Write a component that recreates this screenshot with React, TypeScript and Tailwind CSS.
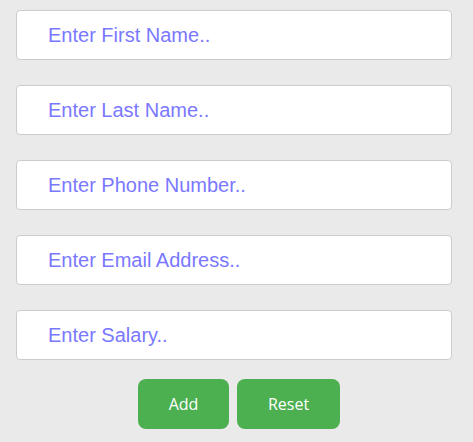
export default function App() {
  const fields = [
    "Enter First Name..",
    "Enter Last Name..",
    "Enter Phone Number..",
    "Enter Email Address..",
    "Enter Salary..",
  ];

  return (
    <div className="min-h-[442px] w-full bg-[#eaeaea] pt-[10px] font-['Liberation_Sans',Arial,sans-serif]">
      <form className="flex flex-col">
        <div className="flex flex-col gap-[25px] pl-4">
          {fields.map((f) => (
            <input
              key={f}
              type="text"
              placeholder={f}
              className="h-[50px] w-[436px] rounded-[4px] border border-[#cccccc] bg-white pl-[31px] text-[20px] text-[#333] outline-none placeholder:text-[#7a78ff]"
            />
          ))}
        </div>
        <div className="mt-[19px] flex gap-2 pl-[138px]">
          <button
            type="button"
            className="h-[50px] w-[91px] rounded-[8px] bg-[#4caf50] font-['Open_Sans',sans-serif] text-[16px] text-white"
          >
            Add
          </button>
          <button
            type="button"
            className="h-[50px] w-[103px] rounded-[8px] bg-[#4caf50] font-['Open_Sans',sans-serif] text-[16px] text-white"
          >
            Reset
          </button>
        </div>
      </form>
    </div>
  );
}
